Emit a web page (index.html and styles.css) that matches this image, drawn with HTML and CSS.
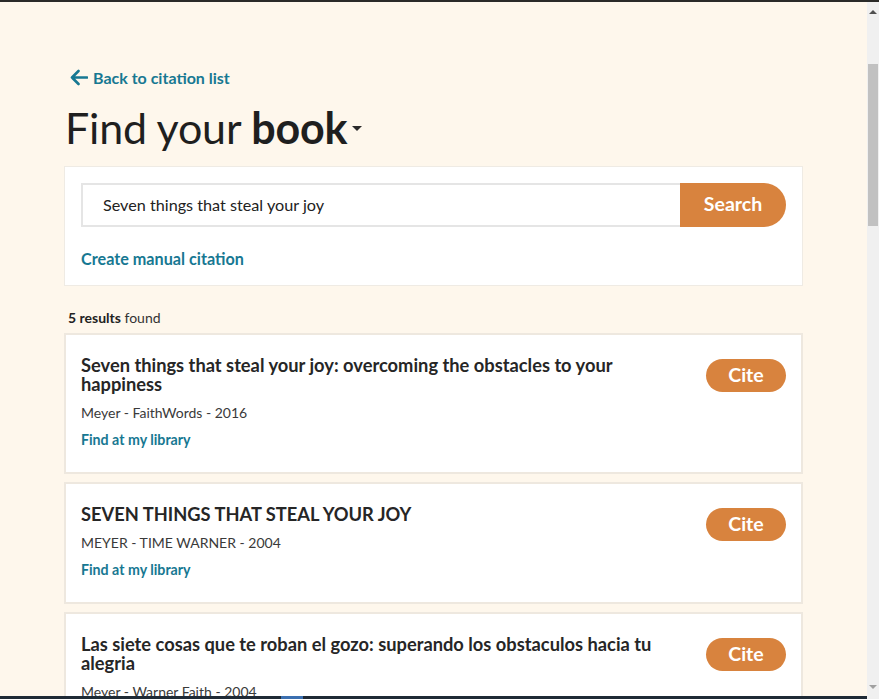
FILE: index.html
```html
<!DOCTYPE html>
<html lang="en">
<head>
<meta charset="utf-8">
<title>Find your book</title>
<link rel="stylesheet" href="styles.css">
</head>
<body>
<div class="topline"></div>
<div class="page">
  <main class="container">
    <a class="back" href="#">
      <svg class="back-icon" width="19" height="17" viewBox="0 0 19 17" aria-hidden="true">
        <path d="M18 8.5 H3 M9.5 2 L3 8.5 L9.5 15" fill="none" stroke="currentColor" stroke-width="2.6" stroke-linecap="round" stroke-linejoin="round"/>
      </svg>
      <span>Back to citation list</span>
    </a>
    <h1 class="title">Find your <strong>book</strong><span class="caret"></span></h1>

    <section class="search-card">
      <form class="search-row">
        <input class="search-input" type="text" value="Seven things that steal your joy">
        <button class="search-btn" type="button">Search</button>
      </form>
      <a class="manual" href="#">Create manual citation</a>
    </section>

    <p class="count"><strong>5 results</strong> found</p>

    <ul class="results">
      <li class="result">
        <div class="result-body">
          <h2 class="result-title">Seven things that steal your joy: overcoming the obstacles to your happiness</h2>
          <p class="meta">Meyer - FaithWords - 2016</p>
          <a class="lib" href="#">Find at my library</a>
        </div>
        <button class="cite" type="button">Cite</button>
      </li>
      <li class="result">
        <div class="result-body">
          <h2 class="result-title">SEVEN THINGS THAT STEAL YOUR JOY</h2>
          <p class="meta">MEYER - TIME WARNER - 2004</p>
          <a class="lib" href="#">Find at my library</a>
        </div>
        <button class="cite" type="button">Cite</button>
      </li>
      <li class="result">
        <div class="result-body">
          <h2 class="result-title">Las siete cosas que te roban el gozo: superando los obstaculos hacia tu alegria</h2>
          <p class="meta">Meyer - Warner Faith - 2004</p>
          <a class="lib" href="#">Find at my library</a>
        </div>
        <button class="cite" type="button">Cite</button>
      </li>
    </ul>
  </main>
</div>
<div class="scrollbar">
  <span class="sb-up"></span>
  <span class="sb-thumb"></span>
  <span class="sb-down"></span>
</div>
<div class="taskbar"><span class="task-accent"></span></div>
</body>
</html>
```

FILE: styles.css
```css
* { box-sizing: border-box; }

html, body {
  margin: 0;
  padding: 0;
  height: 699px;
  overflow: hidden;
}

body {
  background: #fef7ec;
  font-family: Lato, "Noto Sans", sans-serif;
  color: #222;
}

.topline {
  height: 2px;
  background: #2a2a28;
}

.page {
  width: 867px;
  height: 697px;
  overflow: hidden;
}

.container {
  width: 739px;
  margin: 0 auto;
  padding-top: 66px;
}

.back {
  display: inline-flex;
  align-items: center;
  gap: 5px;
  color: #177892;
  text-decoration: none;
  font-weight: 700;
  font-size: 16px;
  line-height: 20px;
  margin-left: 5px;
}

.back-icon { display: block; margin-top: -2px; }

.title {
  margin: 11px 0 0 1px;
  font-size: 43px;
  font-weight: 400;
  line-height: 56px;
  color: #1f1f1f;
  letter-spacing: -0.2px;
}

.title strong { font-weight: 700; }

.caret {
  display: inline-block;
  width: 0;
  height: 0;
  border-left: 5px solid transparent;
  border-right: 5px solid transparent;
  border-top: 5px solid #2a2a2a;
  vertical-align: middle;
  margin-left: 5px;
  position: relative;
  top: -4px;
}

.search-card {
  margin-top: 10px;
  background: #fff;
  border: 1px solid #efebe4;
  padding: 16px;
}

.search-row {
  display: flex;
  margin: 0;
}

.search-input {
  flex: 1;
  height: 44px;
  border: 2px solid #e5e5e5;
  border-right: none;
  padding: 0 0 0 20px;
  font-family: Lato, "Noto Sans", sans-serif;
  font-size: 16.2px;
  color: #222;
  background: #fff;
  outline: none;
}

.search-btn {
  width: 106px;
  height: 44px;
  border: none;
  background: #d8833e;
  color: #fff;
  font-family: Lato, "Noto Sans", sans-serif;
  font-weight: 700;
  font-size: 19.5px;
  border-radius: 0 22px 22px 0;
  padding: 0 0 2px 0;
}

.manual {
  display: block;
  margin-top: 22px;
  color: #177892;
  font-weight: 700;
  font-size: 16.2px;
  line-height: 20px;
  text-decoration: none;
}

.count {
  margin: 24px 0 0 4px;
  font-size: 14px;
  line-height: 16px;
  color: #333;
}

.count strong { font-weight: 700; color: #222; }

.results {
  list-style: none;
  margin: 7px 0 0 0;
  padding: 0;
  display: flex;
  flex-direction: column;
  gap: 8px;
}

.result {
  display: flex;
  align-items: flex-start;
  gap: 45px;
  background: #fff;
  border: 2px solid #eee8df;
  padding: 21px 15px 22px 15px;
}

.result-body { flex: 1; }

.result-title {
  margin: 0;
  font-size: 18.3px;
  font-weight: 700;
  line-height: 19px;
  color: #262626;
}

.meta {
  margin: 9px 0 0 0;
  font-size: 14px;
  line-height: 20px;
  color: #3a3a3a;
}

.lib {
  display: block;
  margin-top: 7px;
  color: #177892;
  font-weight: 700;
  font-size: 14.2px;
  line-height: 20px;
  text-decoration: none;
}

.cite {
  flex: none;
  width: 80px;
  height: 33px;
  margin-top: 3px;
  border: none;
  border-radius: 17px;
  background: #d8833e;
  color: #fff;
  font-family: Lato, "Noto Sans", sans-serif;
  font-weight: 700;
  font-size: 19.5px;
  padding: 0 0 2px 0;
}

.scrollbar {
  position: fixed;
  top: 2px;
  right: 0;
  width: 12px;
  height: 697px;
  background: #f0f0f0;
}

.sb-up {
  position: absolute;
  top: 8px;
  left: 2px;
  border-left: 4px solid transparent;
  border-right: 4px solid transparent;
  border-bottom: 4px solid #505050;
}

.sb-thumb {
  position: absolute;
  top: 62px;
  left: 1px;
  width: 10px;
  height: 162px;
  background: #c1c1c1;
}

.sb-down {
  position: absolute;
  bottom: 10px;
  left: 2px;
  border-left: 4px solid transparent;
  border-right: 4px solid transparent;
  border-top: 4px solid #a0a0a0;
}

.taskbar {
  position: fixed;
  left: 0;
  bottom: 0;
  width: 867px;
  height: 3px;
  background: #1f2a35;
}

.task-accent {
  position: absolute;
  left: 281px;
  top: 0;
  width: 22px;
  height: 3px;
  background: #3b6fb0;
}
```
